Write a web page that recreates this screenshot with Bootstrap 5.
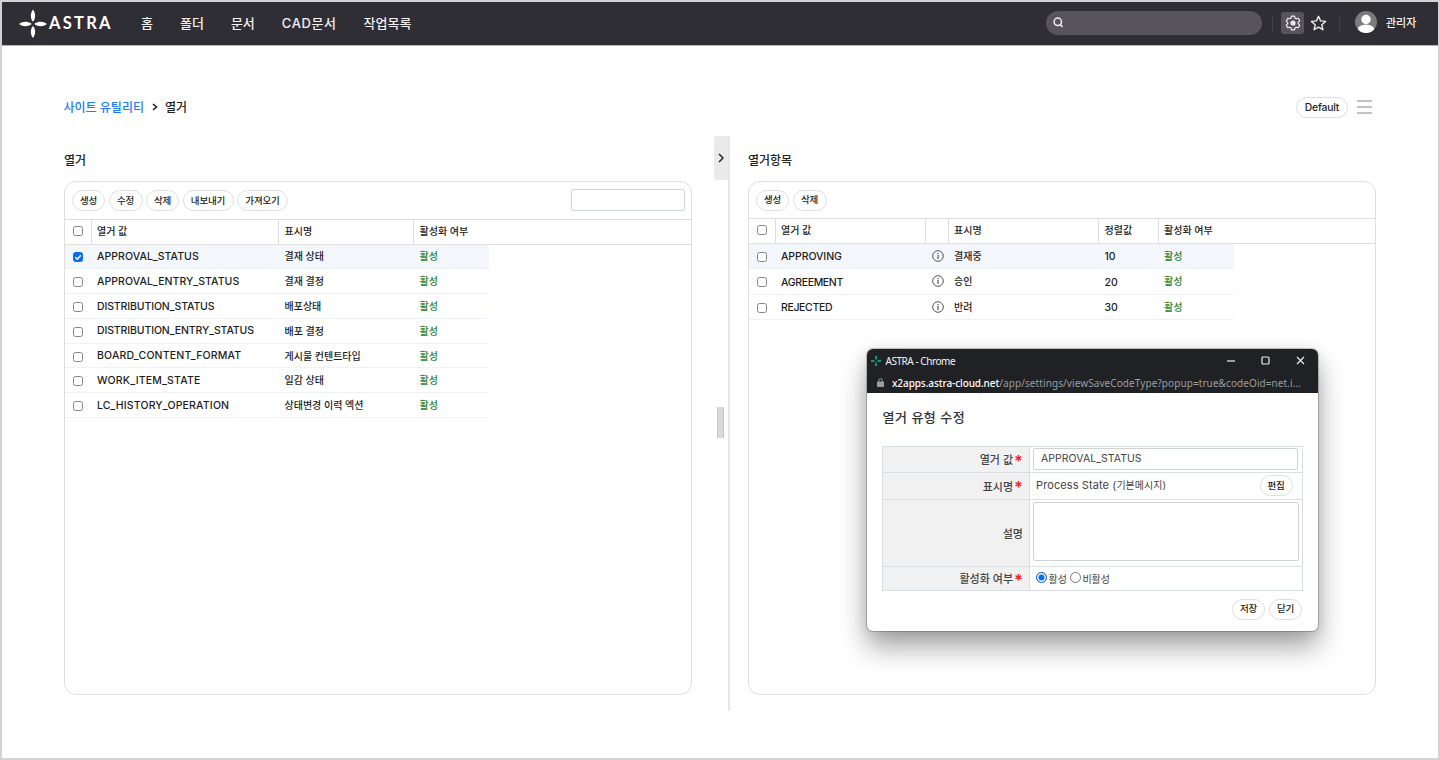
<!DOCTYPE html>
<html lang="ko">
<head>
<meta charset="utf-8">
<meta name="viewport" content="width=device-width, initial-scale=1">
<title>ASTRA</title>
<link href="https://cdn.jsdelivr.net/npm/bootstrap@5.3.0/dist/css/bootstrap.min.css" rel="stylesheet">
<style>
*{box-sizing:border-box}
body{width:1440px;height:760px;overflow:hidden;background:#fff;border:2px solid #d2d2d2;font-family:Inter,"Noto Sans CJK KR",sans-serif;font-size:10px;line-height:1.2;color:#222;font-weight:500}
.topbar{height:43px;background:#2f2e35;padding:0;flex-wrap:nowrap;color:#f2f2f2;box-shadow:0 1px 0 #b5b5b8}
.logo{margin-left:17px;width:93px;height:30px;display:block}
.menu{margin-left:29px;gap:27px;font-size:13px}
.menu a{color:#f0f0f0;text-decoration:none;white-space:nowrap}
.menu .cad{letter-spacing:.6px}
.searchbar{width:216px;height:24px;border-radius:12px;background:#58545b;padding-left:7px;margin-left:auto;margin-bottom:2px}
.vr-line{width:1px;height:18px;background:#39424e}
.gearbox{width:23px;height:22px;border-radius:3px;background:#58545b;margin-bottom:2px}
.user{font-size:11px;width:31px;white-space:nowrap;margin:0 21px 0 9px;padding-top:1px}
.crumbs{height:22px;margin:51px 66px 0 61.5px;font-size:12px}
.crumbs a,.crumbs span{padding-top:3px}
.crumbs a{color:#1d78ff;text-decoration:none}
.pill{display:inline-flex;align-items:center;justify-content:center;height:21px;border:1px solid #dedede;border-radius:11px;background:#fff;color:#222;font-size:9.5px;font-weight:500;padding:0;line-height:1;letter-spacing:-.15px;white-space:nowrap}
.w33{width:33px}.w34{width:34px}.w51{width:51px}
.panes{margin-top:18px;height:576px;padding-left:62px}
.pane-left{width:628px}
.pane-right{width:628px}
.pane-title{font-size:12px;height:45px;line-height:50px}
.panel{height:514px;border:1px solid #dfdfdf;border-radius:12px;overflow:hidden}
.toolrow{height:37px;padding:0 6.5px 0 7px;gap:3.5px}
.toolrow .find{width:114px;height:22px;border:1px solid #ced6d8;border-radius:2px;margin-bottom:1px}
.hd,.ln{display:grid;align-items:stretch}
.lt .hd,.lt .ln{grid-template-columns:26.5px 187.5px 135px 75px 1fr}
.rt .hd,.rt .ln{grid-template-columns:26.5px 150.5px 22.5px 150.5px 59.5px 75px 1fr}
.hd{border-top:1px solid #dedede;border-bottom:1px solid #dedede;height:25.5px}
.hd>div,.ln>div{display:flex;align-items:center;padding-left:5.5px;white-space:nowrap}
.hd>div{padding-bottom:2px}
.hd>div:first-child,.ln>div:first-child{padding-left:8px}
.hd>.sep{border-right:1px solid #dedede}
.ln{height:24.8px;color:#1c1c1c}
.rt .ln{height:25.5px}
.ln>div:not(.void){border-bottom:1px solid #eef1f7}
.ln.on>div:not(.void){background:#f3f7fc}
.ln .en{font-size:10.5px;letter-spacing:.05px;padding-top:2px}
.rt .ln .en{padding-top:4px;letter-spacing:-.08px}
.ln .tight{letter-spacing:-.12px}
.ln .loose{letter-spacing:.18px}
.rt .ln .en.tight{letter-spacing:-.35px}
.ln .ok{color:#25822d}
.box{width:10px;height:10px;border:1px solid #858585;border-radius:2.5px;background:#fff;margin-top:2px}
.hd .box{margin-top:0}
.box.ck{background:#0b6cf0;border-color:#0b6cf0}
.box svg{display:block;margin:-1px}
.splitter{width:56px;position:relative;padding-left:21.5px}
.splitter .tab{width:14.5px;height:44px;background:#eaeaea;border-radius:3px 0 0 3px}
.splitter .rail{width:2px;height:575px;background:#e6e6e6}
.splitter .grip{position:absolute;left:25px;top:271px;width:7px;height:31px;background:#d9d9d9;border:solid #c6c6c6;border-width:0 1px}
.pop{position:absolute;left:867px;top:349px;width:450.5px;height:282px;border-radius:6px;background:#fff;box-shadow:0 0 0 1px rgba(0,0,0,.2),0 16px 28px rgba(0,0,0,.36),0 2px 14px rgba(0,0,0,.1)}
.pop-head{height:44px;background:#202124;border-radius:6px 6px 0 0;font-family:"Noto Sans","Open Sans",sans-serif;font-size:10px;color:#f4f4f4;font-weight:400}
.pop-title{height:23px;padding:0 12px 0 3px;letter-spacing:-.4px}
.pop-title span{letter-spacing:-.45px}
.pop-url{height:21px;padding-left:10px;color:#9a9da1;white-space:nowrap;letter-spacing:.085px}
.pop-url b{color:#fff;font-weight:500;letter-spacing:-.08px}
.pop h1{font-size:13px;font-weight:500;letter-spacing:.5px;margin:16px 0 0 15.5px;height:17px;line-height:17px;color:#333}
.form{margin:20px 0 0 15px;width:420.5px;border:1px solid #d9dfe3;border-bottom:0;color:#444}
.fr{display:grid;grid-template-columns:147px 1fr;border-bottom:1px solid #d9dfe3}
.fr>.lab{background:#f1f1f1;border-right:1px solid #d9dfe3;display:flex;align-items:center;justify-content:flex-end;padding:3px 6px 0 0;font-size:11px;font-weight:500;color:#444}
.lab i{color:#f22;font-style:normal;font-size:16px;font-weight:700;line-height:8px;height:8px;margin-left:1px}
.fld{border:1px solid #ccd4d6;border-radius:2px;margin-left:3px;background:#fff}
.rad{width:11px;height:11px;border:1px solid #777;border-radius:50%;background:#fff;margin-bottom:2px}
.rad.sel{border-color:#0b6cf0;background:#0b6cf0;box-shadow:inset 0 0 0 1.5px #fff}
</style>
</head>
<body>
<nav class="navbar topbar d-flex align-items-center">
  <svg class="logo" viewBox="0 0 93 30" fill="#fff"><path d="M14 .5C16.500 4 17 8 14.600 12.200h-1.200C11 8 11.500 4 14 .5ZM14 29c2.500-3.500 3-7.500.6-11.500h-1.200C11 21.500 11.500 25.500 14 29ZM0 14.900c4-2.900 8-2.900 12.200-.6v1.200C8 17.800 4 17.800 0 14.900ZM28 14.900c-4-2.900-8-2.900-12.200-.6v1.200c4.200 2.300 8.200 2.300 12.200-.6Z"/><text x="30" y="20" font-family="Lato" font-size="16.500" font-weight="700" textLength="61.500" lengthAdjust="spacing">ASTRA</text></svg>
  <div class="menu d-flex"><a href="#">홈</a><a href="#">폴더</a><a href="#">문서</a><a href="#" class="cad">CAD문서</a><a href="#">작업목록</a></div>
  <div class="searchbar d-flex align-items-center"><svg width="11" height="11" fill="none" stroke="#eee" stroke-width="1.500"><circle cx="4.800" cy="4.800" r="3.700"/><path d="m7.200 7.200 2.300 2.800"/></svg></div>
  <div class="vr-line" style="margin:0 8px 0 10px"></div>
  <div class="gearbox d-flex align-items-center justify-content-center"><svg width="16" height="16" viewBox="0 0 16 16" fill="none" stroke="#eee" stroke-width="1.200" stroke-linejoin="round"><path d="M6.500 1.200h3l.5 1.900 1.200.7 2-.6 1.500 2.600L13.300 7.300v1.400l1.400 1.500-1.500 2.600-2-.6-1.200.7-.5 1.900h-3L6 12.900l-1.200-.7-2 .6-1.500-2.600 1.400-1.500V7.300L1.300 5.800l1.500-2.600 2 .6L6 3.100Z"/><circle cx="8" cy="8" r="2" fill="#eee"/></svg></div>
  <svg style="margin:0 0 2px 6px" width="17" height="16" viewBox="0 0 17 16" fill="none" stroke="#eee" stroke-width="1.400" stroke-linejoin="round"><path d="m8.500 1.300 2.100 4.600 5 .5-3.800 3.400 1.100 4.900-4.400-2.500-4.400 2.500 1.100-4.900L1.400 6.400l5-.5Z"/></svg>
  <div class="vr-line" style="margin:0 15px 0 12px"></div>
  <svg class="mb-1" width="22" height="22" viewBox="0 0 22 22"><defs><clipPath id="av"><circle cx="11" cy="11" r="11"/></clipPath></defs><g clip-path="url(#av)"><path fill="#7b7a7d" d="M0 0h22v22H0z"/><circle cx="11" cy="8.500" r="4.700" fill="#fff"/><ellipse cx="11" cy="19" rx="8.500" ry="5.500" fill="#fff"/></g></svg>
  <div class="user">관리자</div>
</nav>
<div class="crumbs d-flex align-items-center">
  <a href="#">사이트 유틸리티</a>
  <svg width="6" height="8" style="margin:0 7px 0 8px" fill="none" stroke="#222" stroke-width="1.600"><path d="m1 1 3.500 3L1 7"/></svg>
  <span>열거</span>
  <button class="btn pill ms-auto" style="width:52px;font-size:10.300px">Default</button>
  <svg width="15" height="14" style="margin-left:9px" stroke="#888" stroke-width="1.200"><path d="M0 1h15M0 7h15M0 13h15"/></svg>
</div>
<div class="panes d-flex">
  <section class="pane-left lt">
    <div class="pane-title">열거</div>
    <div class="panel">
      <div class="toolrow d-flex align-items-center">
        <button class="btn pill w33">생성</button><button class="btn pill w34">수정</button><button class="btn pill w33">삭제</button><button class="btn pill w51">내보내기</button><button class="btn pill w51">가져오기</button>
        <div class="find ms-auto"></div>
      </div>
      <div class="hd"><div class="sep"><span class="box"></span></div><div class="sep">열거 값</div><div class="sep">표시명</div><div>활성화 여부</div><div></div></div>
      <div class="ln on"><div><span class="box ck"><svg width="10" height="10" fill="none" stroke="#fff" stroke-width="1.500"><path d="m2.300 5.200 2 2 3.500-4"/></svg></span></div><div class="en">APPROVAL_STATUS</div><div>결재 상태</div><div class="ok">활성</div><div class="void"></div></div>
      <div class="ln"><div><span class="box"></span></div><div class="en">APPROVAL_ENTRY_STATUS</div><div>결재 결정</div><div class="ok">활성</div><div class="void"></div></div>
      <div class="ln"><div><span class="box"></span></div><div class="en tight">DISTRIBUTION_STATUS</div><div>배포상태</div><div class="ok">활성</div><div class="void"></div></div>
      <div class="ln"><div><span class="box"></span></div><div class="en tight">DISTRIBUTION_ENTRY_STATUS</div><div>배포 결정</div><div class="ok">활성</div><div class="void"></div></div>
      <div class="ln"><div><span class="box"></span></div><div class="en loose">BOARD_CONTENT_FORMAT</div><div>게시물 컨텐트타입</div><div class="ok">활성</div><div class="void"></div></div>
      <div class="ln"><div><span class="box"></span></div><div class="en loose">WORK_ITEM_STATE</div><div>일감 상태</div><div class="ok">활성</div><div class="void"></div></div>
      <div class="ln"><div><span class="box"></span></div><div class="en loose">LC_HISTORY_OPERATION</div><div>상태변경 이력 엑션</div><div class="ok">활성</div><div class="void"></div></div>
    </div>
  </section>
  <div class="splitter d-flex">
    <div class="tab d-flex align-items-center justify-content-center"><svg width="6" height="10" fill="none" stroke="#222" stroke-width="1.500"><path d="m1 1 4 4-4 4"/></svg></div>
    <div class="rail"></div><div class="grip"></div>
  </div>
  <section class="pane-right rt">
    <div class="pane-title">열거항목</div>
    <div class="panel">
      <div class="toolrow d-flex align-items-center" style="height:36px"><button class="btn pill w33">생성</button><button class="btn pill w34">삭제</button></div>
      <div class="hd"><div class="sep"><span class="box"></span></div><div class="sep">열거 값</div><div class="sep"></div><div class="sep">표시명</div><div class="sep">정렬값</div><div>활성화 여부</div><div></div></div>
      <div class="ln on"><div><span class="box"></span></div><div class="en">APPROVING</div><div><svg width="12" height="12" fill="none" stroke="#555"><circle cx="6" cy="6" r="5.300"/><path d="M6 5v4M6 3v1.200" stroke-width="1.200"/></svg></div><div>결재중</div><div class="en">10</div><div class="ok">활성</div><div class="void"></div></div>
      <div class="ln"><div><span class="box"></span></div><div class="en tight">AGREEMENT</div><div><svg width="12" height="12" fill="none" stroke="#555"><circle cx="6" cy="6" r="5.300"/><path d="M6 5v4M6 3v1.200" stroke-width="1.200"/></svg></div><div>승인</div><div class="en">20</div><div class="ok">활성</div><div class="void"></div></div>
      <div class="ln"><div><span class="box"></span></div><div class="en tight">REJECTED</div><div><svg width="12" height="12" fill="none" stroke="#555"><circle cx="6" cy="6" r="5.300"/><path d="M6 5v4M6 3v1.200" stroke-width="1.200"/></svg></div><div>반려</div><div class="en">30</div><div class="ok">활성</div><div class="void"></div></div>
    </div>
  </section>
</div>
<div class="pop">
  <div class="pop-head">
    <div class="pop-title d-flex align-items-center">
      <svg width="12" height="12" stroke="#16b59b" stroke-width="1.500"><path d="M6 1v3.500M6 7.500V11M1 6h3.500M7.500 6H11"/></svg>
      <span style="margin-left:3.500px">ASTRA - Chrome</span>
      <svg class="ms-auto" width="80" height="12" fill="none" stroke="#eee" stroke-width="1.200"><path d="M1 6h8"/><rect x="36" y="2" width="7" height="7" rx="1"/><path d="m71 2 7 7M78 2l-7 7"/></svg>
    </div>
    <div class="pop-url d-flex align-items-center"><svg width="7" height="9" fill="#9a9da1"><rect y="3.500" width="7" height="5.500" rx="1"/><path d="M1.700 4V2.500a1.800 1.800 0 0 1 3.600 0V4" fill="none" stroke="#9a9da1"/></svg><span style="margin-left:8px"><b>x2apps.astra-cloud.net</b>/app/settings/viewSaveCodeType?popup=true&amp;codeOid=net.i...</span></div>
  </div>
  <h1>열거 유형 수정</h1>
  <div class="form">
    <div class="fr" style="height:25.500px"><div class="lab">열거 값<i>*</i></div><div><div class="fld d-flex align-items-center" style="width:264.500px;height:22px;margin-top:1px;padding:1px 0 0 7px;font-size:10.500px;font-weight:400;letter-spacing:.05px"><span>APPROVAL_STATUS</span></div></div></div>
    <div class="fr" style="height:27.500px"><div class="lab">표시명<i>*</i></div><div class="d-flex align-items-center justify-content-between" style="padding:0 9px 0 6px;font-weight:400"><span><span style="font-size:11px;letter-spacing:.1px">Process State (</span>기본메시지)</span><button class="btn pill w33">편집</button></div></div>
    <div class="fr" style="height:67px"><div class="lab">설명</div><div><div class="fld" style="width:265.500px;height:59px;margin-top:1.500px"></div></div></div>
    <div class="fr" style="height:24px"><div class="lab">활성화 여부<i>*</i></div><div class="d-flex align-items-center" style="padding-left:6px;font-weight:400"><span class="rad sel"></span><span style="margin:1px 3px 0 1.500px">활성</span><span class="rad"></span><span style="margin:1px 0 0 1.500px">비활성</span></div></div>
  </div>
  <div class="d-flex justify-content-end" style="gap:4px;padding:7.500px 15.500px 0 0"><button class="btn pill w33">저장</button><button class="btn pill w33">닫기</button></div>
</div>
<script src="https://cdn.jsdelivr.net/npm/bootstrap@5.3.0/dist/js/bootstrap.bundle.min.js"></script>
</body>
</html>
